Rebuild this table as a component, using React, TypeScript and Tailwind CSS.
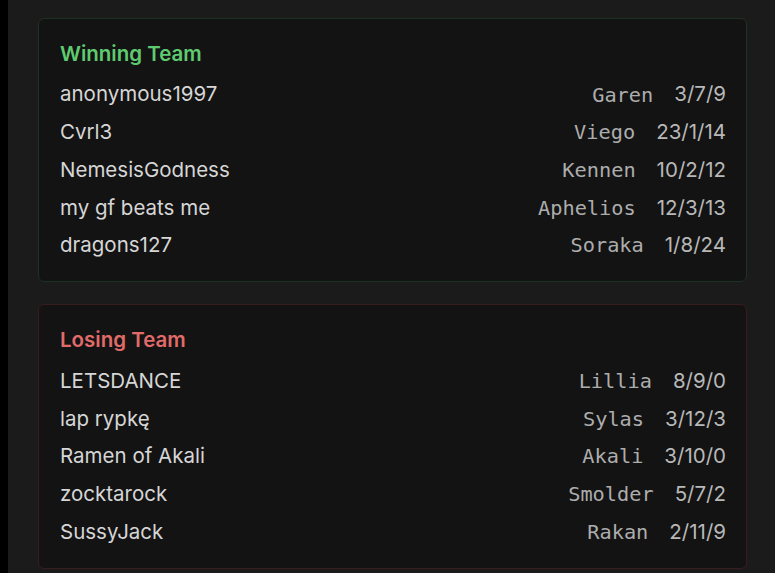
import React from "react";

interface Player {
  name: string;
  champion: string;
  kda: string;
}

const winners: Player[] = [
  { name: "anonymous1997", champion: "Garen", kda: "3/7/9" },
  { name: "Cvrl3", champion: "Viego", kda: "23/1/14" },
  { name: "NemesisGodness", champion: "Kennen", kda: "10/2/12" },
  { name: "my gf beats me", champion: "Aphelios", kda: "12/3/13" },
  { name: "dragons127", champion: "Soraka", kda: "1/8/24" },
];

const losers: Player[] = [
  { name: "LETSDANCE", champion: "Lillia", kda: "8/9/0" },
  { name: "lap rypkę", champion: "Sylas", kda: "3/12/3" },
  { name: "Ramen of Akali", champion: "Akali", kda: "3/10/0" },
  { name: "zocktarock", champion: "Smolder", kda: "5/7/2" },
  { name: "SussyJack", champion: "Rakan", kda: "2/11/9" },
];

function TeamCard({ title, players, win }: { title: string; players: Player[]; win: boolean }) {
  return (
    <section
      className={`rounded-md border bg-[#131313] pl-[21px] pr-[20px] pt-[21px] pb-[17px] ${
        win ? "border-[#1f3123]" : "border-[#3a1c1e]"
      }`}
    >
      <h2
        className={`h-[28px] text-[20.5px] font-semibold leading-[28px] ${
          win ? "text-[#5fcb70]" : "text-[#e06b69]"
        }`}
      >
        {title}
      </h2>
      <ul className="mt-[8px]">
        {players.map((p, i) => (
          <li key={i} className="flex h-[37.7px] items-center justify-between">
            <span className="text-[20.5px] text-[#d6d6d6]">{p.name}</span>
            <span className="flex items-center gap-[21px]">
              <span className="font-['DejaVu_Sans_Mono',monospace] text-[20.3px] text-[#adadad]">{p.champion}</span>
              <span className="text-[20.5px] text-[#b8b8b8]">{p.kda}</span>
            </span>
          </li>
        ))}
      </ul>
    </section>
  );
}

export default function App() {
  return (
    <div className="flex h-[573px] w-[775px] overflow-hidden bg-[#1b1b1b] font-['Inter',sans-serif]">
      <div className="w-[8px] shrink-0 bg-black" />
      <main className="flex flex-1 flex-col gap-[22px] pl-[30px] pr-[28px] pt-[18px]">
        <TeamCard title="Winning Team" players={winners} win />
        <TeamCard title="Losing Team" players={losers} win={false} />
      </main>
    </div>
  );
}
